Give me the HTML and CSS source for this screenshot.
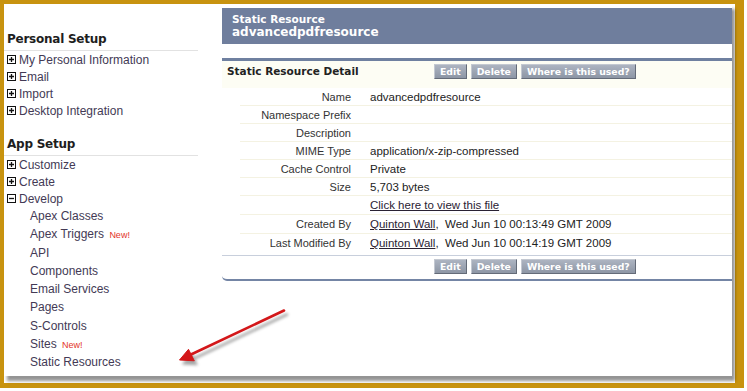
FILE: index.html
```html
<!DOCTYPE html>
<html>
<head>
<meta charset="utf-8">
<link rel="stylesheet" href="styles.css">
</head>
<body>
<div class="frame">
  <div class="shot">
    <aside class="sidebar">
      <h2 class="side-head">Personal Setup</h2>
      <ul class="tree">
        <li><svg class="tog" viewBox="0 0 9 9"><rect x="0.5" y="0.5" width="8" height="8" fill="#fff" stroke="#111"/><path d="M2 4.5h5M4.5 2v5" stroke="#111" stroke-width="1.3"/></svg>My Personal Information</li>
        <li><svg class="tog" viewBox="0 0 9 9"><rect x="0.5" y="0.5" width="8" height="8" fill="#fff" stroke="#111"/><path d="M2 4.5h5M4.5 2v5" stroke="#111" stroke-width="1.3"/></svg>Email</li>
        <li><svg class="tog" viewBox="0 0 9 9"><rect x="0.5" y="0.5" width="8" height="8" fill="#fff" stroke="#111"/><path d="M2 4.5h5M4.5 2v5" stroke="#111" stroke-width="1.3"/></svg>Import</li>
        <li><svg class="tog" viewBox="0 0 9 9"><rect x="0.5" y="0.5" width="8" height="8" fill="#fff" stroke="#111"/><path d="M2 4.5h5M4.5 2v5" stroke="#111" stroke-width="1.3"/></svg>Desktop Integration</li>
      </ul>
      <h2 class="side-head second">App Setup</h2>
      <ul class="tree">
        <li><svg class="tog" viewBox="0 0 9 9"><rect x="0.5" y="0.5" width="8" height="8" fill="#fff" stroke="#111"/><path d="M2 4.5h5M4.5 2v5" stroke="#111" stroke-width="1.3"/></svg>Customize</li>
        <li><svg class="tog" viewBox="0 0 9 9"><rect x="0.5" y="0.5" width="8" height="8" fill="#fff" stroke="#111"/><path d="M2 4.5h5M4.5 2v5" stroke="#111" stroke-width="1.3"/></svg>Create</li>
        <li><svg class="tog" viewBox="0 0 9 9"><rect x="0.5" y="0.5" width="8" height="8" fill="#fff" stroke="#111"/><path d="M2 4.5h5" stroke="#111" stroke-width="1.3"/></svg>Develop</li>
      </ul>
      <ul class="sub">
        <li>Apex Classes</li>
        <li>Apex Triggers <span class="new">New!</span></li>
        <li>API</li>
        <li>Components</li>
        <li>Email Services</li>
        <li>Pages</li>
        <li>S-Controls</li>
        <li>Sites <span class="new">New!</span></li>
        <li>Static Resources</li>
        <li>Tools</li>
      </ul>
    </aside>
    <main class="content">
      <div class="page-head">
        <div class="ph-type">Static Resource</div>
        <div class="ph-name">advancedpdfresource</div>
      </div>
      <section class="block">
        <div class="block-head">
          <div class="block-title">Static Resource Detail</div>
          <div class="btns">
            <span class="btn">Edit</span>
            <span class="btn">Delete</span>
            <span class="btn">Where is this used?</span>
          </div>
        </div>
        <div class="block-body">
          <div class="row"><div class="lbl">Name</div><div class="val">advancedpdfresource</div></div>
          <div class="row"><div class="lbl">Namespace Prefix</div><div class="val"></div></div>
          <div class="row"><div class="lbl">Description</div><div class="val"></div></div>
          <div class="row"><div class="lbl">MIME Type</div><div class="val">application/x-zip-compressed</div></div>
          <div class="row"><div class="lbl">Cache Control</div><div class="val">Private</div></div>
          <div class="row"><div class="lbl">Size</div><div class="val">5,703 bytes</div></div>
          <div class="row tall"><div class="lbl"></div><div class="val"><a class="lnk">Click here to view this file</a></div></div>
          <div class="row tall"><div class="lbl">Created By</div><div class="val"><a class="lnk">Quinton Wall</a>,&nbsp; Wed Jun 10 00:13:49 GMT 2009</div></div>
          <div class="row tall last"><div class="lbl">Last Modified By</div><div class="val"><a class="lnk">Quinton Wall</a>,&nbsp; Wed Jun 10 00:14:19 GMT 2009</div></div>
        </div>
        <div class="block-foot">
          <div class="btns">
            <span class="btn">Edit</span>
            <span class="btn">Delete</span>
            <span class="btn">Where is this used?</span>
          </div>
        </div>
      </section>
    </main>
  </div>
</div>
<svg class="arrow" width="747" height="391" viewBox="0 0 747 391">
  <path d="M284 310.5 L191 354.5" stroke="#d3171a" stroke-width="2.6" stroke-linecap="round" fill="none"/>
  <path d="M179.5 360 L188.5 349.3 L194.3 360.8 Z" fill="#d3171a" stroke="#d3171a" stroke-width="1" stroke-linejoin="round"/>
</svg>
</body>
</html>
```
FILE: styles.css
```css
html, body {
  margin: 0;
  padding: 0;
  background: #fff;
}
body {
  position: relative;
  width: 747px;
  height: 391px;
  overflow: hidden;
  font-family: "Liberation Sans", Arial, sans-serif;
}
.frame {
  width: 731px;
  height: 379px;
  border-style: solid;
  border-color: #c8930f;
  border-width: 4px 9px 5px 4px;
  background: #fff;
}
.shot {
  width: 728px;
  height: 372px;
  display: flex;
  overflow: hidden;
  background: #fff;
  box-shadow: 3px 5px 3px rgba(0, 0, 0, 0.42);
}

/* sidebar */
.sidebar {
  width: 194px;
  flex: none;
  padding-top: 27px;
}
.side-head {
  margin: 0;
  padding: 0 0 3px 3px;
  font-family: "DejaVu Sans", Verdana, sans-serif;
  font-weight: bold;
  font-size: 12px;
  letter-spacing: -0.25px;
  line-height: 16px;
  color: #1e1e1e;
  border-bottom: 1px solid #e2e2e2;
}
.side-head.second {
  margin-top: 17px;
}
.tree, .sub {
  list-style: none;
  margin: 0;
  padding: 0;
}
.tree li {
  display: flex;
  align-items: center;
  height: 17px;
  padding-left: 3px;
  font-size: 12px;
  color: #433a55;
  white-space: nowrap;
}
.tog {
  width: 9px;
  height: 9px;
  margin-right: 3px;
  flex: none;
}
.sub li {
  height: 18.3px;
  line-height: 18.3px;
  padding-left: 26px;
  font-size: 12px;
  color: #433a55;
  white-space: nowrap;
}
.new {
  color: #e3342a;
  font-size: 9px;
  margin-left: 2px;
}

/* main */
.content {
  width: 510px;
  flex: none;
  margin-left: 24px;
}
.page-head {
  margin-top: 4px;
  height: 36px;
  box-sizing: border-box;
  padding: 5px 0 0 10px;
  background: #6f7e9d;
  color: #fff;
  font-family: "DejaVu Sans", Verdana, sans-serif;
  font-weight: bold;
}
.ph-type {
  font-size: 10.5px;
  line-height: 13px;
}
.ph-name {
  font-size: 12px;
  line-height: 13px;
}
.block {
  margin-top: 14px;
  border-top: 3px solid #6f80a0;
  border-bottom: 2px solid #7485a5;
  border-bottom-left-radius: 5px;
  background: #fff;
}
.block-head {
  display: grid;
  grid-template-columns: 212px auto;
  height: 27px;
  box-sizing: border-box;
  padding-top: 3px;
  background: #fdfdf4;
}
.block-title {
  padding-left: 5px;
  font-family: "DejaVu Sans", Verdana, sans-serif;
  font-weight: bold;
  font-size: 10.5px;
  line-height: 15px;
  color: #222;
}
.btns {
  display: flex;
  gap: 4px;
}
.btn {
  display: block;
  height: 15px;
  box-sizing: border-box;
  padding: 0 5px;
  border: 1px solid;
  border-color: #c3c8d1 #646b78 #646b78 #c3c8d1;
  background: linear-gradient(#adb4c1, #8d96a5);
  color: #fff;
  font-family: "DejaVu Sans", Verdana, sans-serif;
  font-weight: bold;
  font-size: 9.3px;
  line-height: 13px;
  white-space: nowrap;
}
.block-body {
  padding-bottom: 2px;
}
.row {
  display: grid;
  grid-template-columns: 111px auto;
  column-gap: 19px;
  margin-left: 18px;
  height: 18px;
  box-sizing: border-box;
  border-bottom: 1px solid #f4f2e2;
  align-items: center;
}
.row.tall {
  height: 19px;
}
.row.last {
  border-bottom-color: transparent;
}
.lbl {
  text-align: right;
  font-size: 11px;
  color: #333;
  white-space: nowrap;
}
.val {
  font-size: 11.5px;
  color: #222;
  white-space: nowrap;
}
.lnk {
  color: #2a2233;
  text-decoration: underline;
}
.block-foot {
  border-top: 1px solid #c8cfdc;
  padding: 3px 0 5px 212px;
}

/* arrow overlay */
.arrow {
  position: absolute;
  left: 0;
  top: 0;
  pointer-events: none;
  filter: drop-shadow(3px 4px 1.5px rgba(0, 0, 0, 0.35));
}
```
